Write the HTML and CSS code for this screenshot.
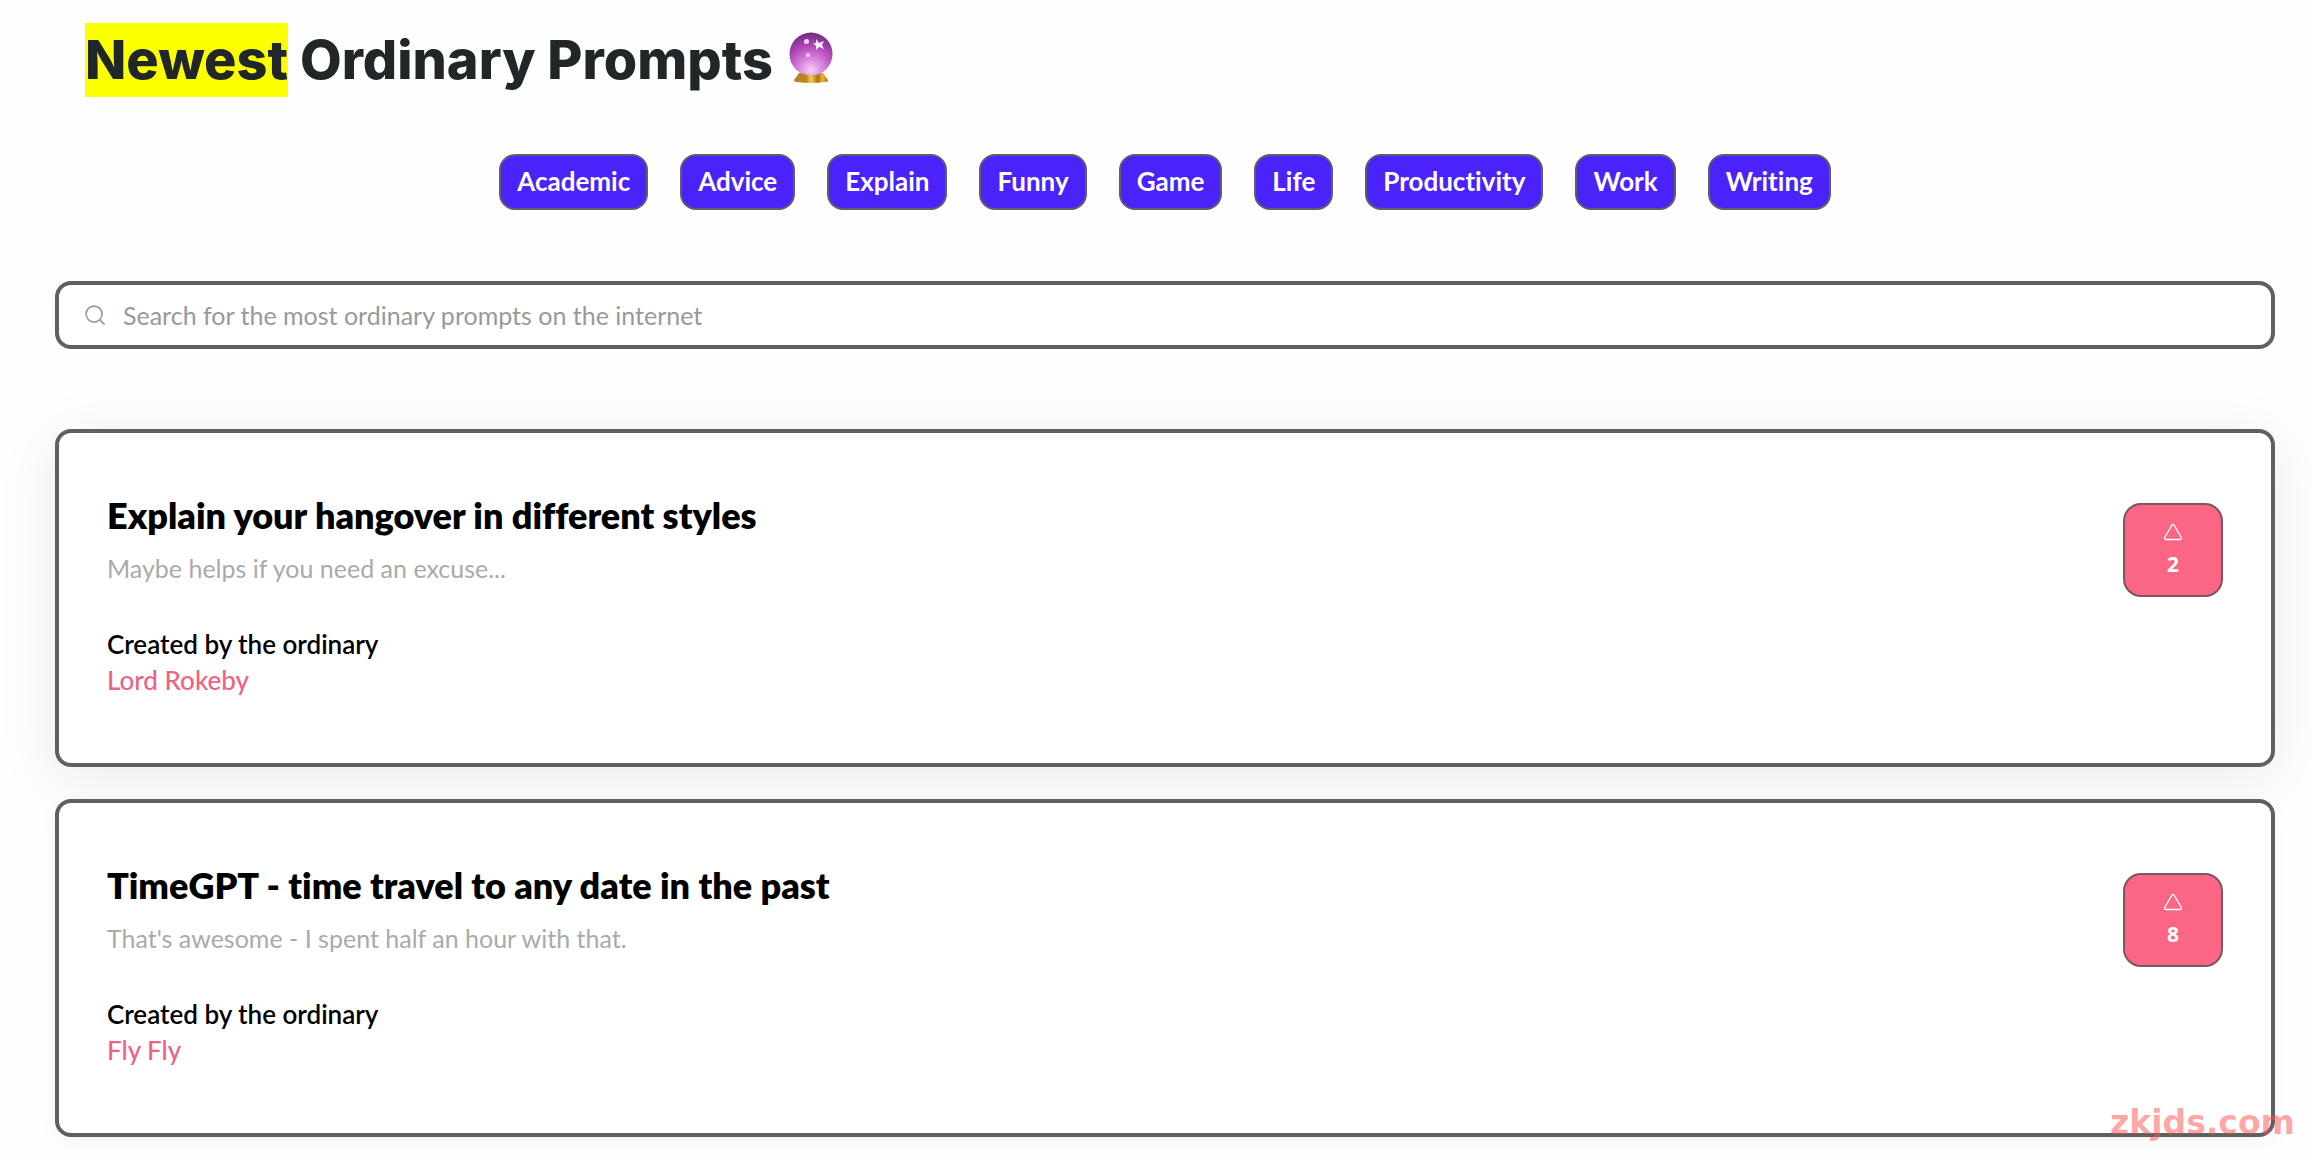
FILE: index.html
```html
<!DOCTYPE html>
<html lang="en">
<head>
 <meta charset="UTF-8">
 <meta name="viewport" content="width=device-width, initial-scale=1.0">
 <title>Ordinary Prompts</title>
 <link rel="stylesheet" href="styles.css">
</head>
<body>
 <main class="page">
 <h1 class="page-title">
 <span><mark class="highlight">Newest</mark> Ordinary Prompts</span>
 <svg class="crystal-ball" viewBox="0 0 48 54" aria-hidden="true">
 <defs>
 <radialGradient id="glass" cx="50%" cy="88%" r="88%">
 <stop offset="0" stop-color="#f8cdf8"></stop>
 <stop offset="0.3" stop-color="#d98ade"></stop>
 <stop offset="0.65" stop-color="#b148b8"></stop>
 <stop offset="1" stop-color="#6f2a80"></stop>
 </radialGradient>
 <linearGradient id="stand" x1="0" x2="1" y1="0" y2="0">
 <stop offset="0" stop-color="#b9831f"></stop>
 <stop offset="0.35" stop-color="#b9831f"></stop>
 <stop offset="0.5" stop-color="#f6cf4a"></stop>
 <stop offset="0.7" stop-color="#a8701a"></stop>
 <stop offset="0.85" stop-color="#e8b835"></stop>
 <stop offset="1" stop-color="#a8701a"></stop>
 </linearGradient>
 </defs>
 <path fill="url(#stand)" d="M12 42 H36 L41 49 Q41 51 38 51 Q24 53 10 51 Q7 51 7 49 Z"></path>
 <circle cx="24" cy="23" r="21.5" fill="url(#glass)"></circle>
 <path fill="#fde9fd" d="M29 8 L32 12 L37 10 L35 14 L37 18 L32 16 L29 19 L29 15 L26 12 L29 12 Z"></path>
 <circle cx="19.5" cy="10.5" r="2.5" fill="#f7cdf7"></circle>
 <circle cx="21" cy="24" r="2" fill="#f7cdf7"></circle>
 </svg>
 </h1>

 <nav class="categories">
 <a class="category" href="#">Academic</a>
 <a class="category" href="#">Advice</a>
 <a class="category" href="#">Explain</a>
 <a class="category" href="#">Funny</a>
 <a class="category" href="#">Game</a>
 <a class="category" href="#">Life</a>
 <a class="category" href="#">Productivity</a>
 <a class="category" href="#">Work</a>
 <a class="category" href="#">Writing</a>
 </nav>

 <label class="search">
 <svg class="search-icon" viewBox="0 0 24 24" fill="none" stroke="currentColor" stroke-width="1.8" stroke-linecap="round" aria-hidden="true">
 <circle cx="11" cy="11" r="8.7"></circle>
 <path d="M17.5 17.5 L22 22"></path>
 </svg>
 <input class="search-input" type="search" aria-label="Search prompts" placeholder="Search for the most ordinary prompts on the internet">
 </label>

 <section class="prompts">
 <article class="card card-active">
 <div class="card-body">
 <h2 class="card-title">Explain your hangover in different styles</h2>
 <p class="card-text">Maybe helps if you need an excuse...</p>
 <p class="card-credit">Created by the ordinary</p>
 <a class="card-author" href="#">Lord Rokeby</a>
 </div>
 <button class="vote" type="button" aria-label="Upvote, 2 votes">
 <svg class="vote-icon" viewBox="0 0 20 18" fill="none" stroke="currentColor" stroke-width="1.3" stroke-linejoin="round" aria-hidden="true">
 <path d="M9 2 Q10 0.8 11 2 L18.3 14.5 Q19 16.5 17 16.5 H3 Q1 16.5 1.7 14.5 Z"></path>
 </svg>
 <span class="vote-count">2</span>
 </button>
 </article>

 <article class="card">
 <div class="card-body">
 <h2 class="card-title">TimeGPT - time travel to any date in the past</h2>
 <p class="card-text">That's awesome - I spent half an hour with that.</p>
 <p class="card-credit">Created by the ordinary</p>
 <a class="card-author" href="#">Fly Fly</a>
 </div>
 <button class="vote" type="button" aria-label="Upvote, 8 votes">
 <svg class="vote-icon" viewBox="0 0 20 18" fill="none" stroke="currentColor" stroke-width="1.3" stroke-linejoin="round" aria-hidden="true">
 <path d="M9 2 Q10 0.8 11 2 L18.3 14.5 Q19 16.5 17 16.5 H3 Q1 16.5 1.7 14.5 Z"></path>
 </svg>
 <span class="vote-count">8</span>
 </button>
 </article>
 </section>
 </main>
 <div class="watermark">zkjds.com</div>
</body>
</html>
```
FILE: styles.css
```css
* {
 margin: 0;
 padding: 0;
 box-sizing: border-box;
}
body {
 background: #fefefe;
 color: #000;
 font-family: Lato, "Open Sans", sans-serif;
 font-size: 25px;
 font-variant-ligatures: none;
 line-height: 36px;
}
a {
 text-decoration: none;
}
.page {
 padding: 23px 37px 16px 55px;
}
.page-title {
 display: flex;
 align-items: center;
 gap: 14px;
 margin-left: 30px;
 color: #212629;
 font-family: Inter, sans-serif;
 font-size: 54px;
 font-weight: 800;
 line-height: 74px;
}
.highlight {
 display: inline-block;
 background: #fbff00;
 color: inherit;
}
.crystal-ball {
 width: 48px;
 height: 54px;
 margin-bottom: 4px;
}
.categories {
 display: flex;
 flex-wrap: wrap;
 justify-content: center;
 gap: 32px;
 margin-top: 57px;
}
.category {
 padding: 7px 16px 9px;
 border: 2px solid #5f5f6b;
 border-radius: 16px;
 background: #4b22fa;
 color: #fff;
 font-size: 26px;
 font-weight: 700;
}
.search {
 display: flex;
 align-items: center;
 gap: 17px;
 height: 68px;
 margin-top: 71px;
 padding: 0 25px 1px;
 border: 4px solid #606060;
 border-radius: 16px;
 background: #fff;
 color: #999;
}
.search-icon {
 width: 22px;
 height: 22px;
}
.search-input {
 flex: 1;
 border: none;
 outline: none;
 background: transparent;
 font: inherit;
 color: #333;
}
.search-input::placeholder {
 color: #999;
}
.prompts {
 display: flex;
 flex-direction: column;
 gap: 32px;
 margin-top: 80px;
}
.card {
 display: flex;
 justify-content: space-between;
 align-items: flex-start;
 padding: 62px 48px 65px;
 border: 4px solid #606060;
 border-radius: 16px;
 background: #fff;
 box-shadow: 0 8px 24px rgba(0, 0, 0, 0.03);
}
.card-active {
 box-shadow: 0 12px 64px rgba(0, 0, 0, 0.08);
}
.card-title {
 margin-bottom: 15px;
 font-size: 36px;
 font-weight: 800;
 line-height: 40px;
}
.card-text {
 margin-bottom: 40px;
 color: #aaa;
}
.card-credit {
 font-size: 26px;
 font-weight: 600;
}
.card-author {
 display: block;
 color: #ee6382;
 font-size: 26px;
 font-weight: 500;
}
.vote {
 display: flex;
 flex-direction: column;
 align-items: center;
 justify-content: center;
 gap: 9px;
 width: 100px;
 height: 94px;
 margin-top: 8px;
 border: 2px solid #7d5560;
 border-radius: 18px;
 background: #fa6684;
 color: #fff;
 cursor: pointer;
}
.vote-icon {
 width: 20px;
 height: 18px;
}
.vote-count {
 font-family: "Noto Sans", sans-serif;
 font-size: 21px;
 font-weight: 700;
 line-height: 28px;
}
.watermark {
 position: absolute;
 right: 17px;
 bottom: 13px;
 color: rgba(255, 80, 80, 0.5);
 font-family: "DejaVu Sans", sans-serif;
 font-size: 33px;
 font-weight: 700;
}
```
